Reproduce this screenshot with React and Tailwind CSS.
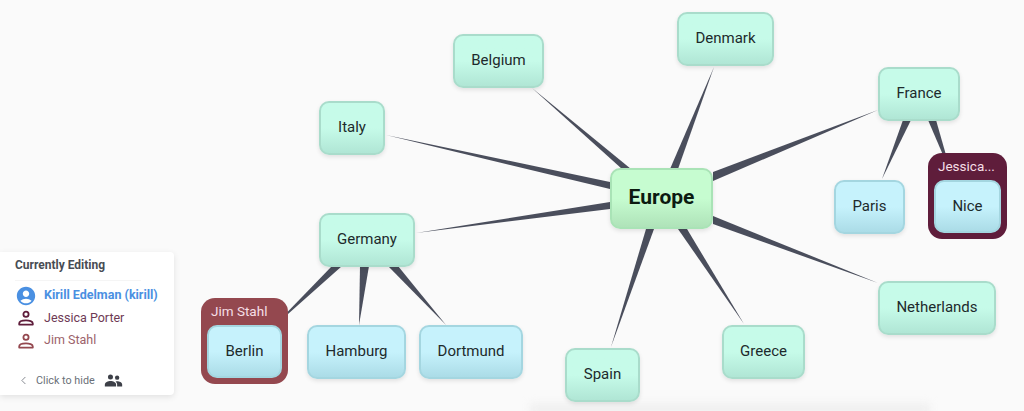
import { ChevronLeft } from "lucide-react";
import { MdAccountCircle } from "react-icons/md";

const mint = "border-[#a9dccb] from-[#c6fbe9] from-50% to-[#b0e6d5]";
const blue = "border-[#a4d6e0] from-[#c6f2fc] from-50% to-[#abdce7]";

// position + size of every node on the canvas
const nodes = [
  { label: "Denmark", color: mint, box: "left-[677px] top-[12px] w-[97px] h-[54px]" },
  { label: "Belgium", color: mint, box: "left-[453px] top-[34px] w-[91px] h-[54px]" },
  { label: "France", color: mint, box: "left-[878px] top-[67px] w-[82px] h-[54px]" },
  { label: "Italy", color: mint, box: "left-[319px] top-[101px] w-[66px] h-[54px]" },
  { label: "Paris", color: blue, box: "left-[834px] top-[180px] w-[71px] h-[54px]" },
  { label: "Germany", color: mint, box: "left-[319px] top-[213px] w-[96px] h-[54px]" },
  { label: "Netherlands", color: mint, box: "left-[878px] top-[281px] w-[118px] h-[54px]" },
  { label: "Hamburg", color: blue, box: "left-[307px] top-[325px] w-[99px] h-[54px]" },
  { label: "Dortmund", color: blue, box: "left-[419px] top-[325px] w-[104px] h-[54px]" },
  { label: "Greece", color: mint, box: "left-[722px] top-[325px] w-[83px] h-[54px]" },
  { label: "Spain", color: mint, box: "left-[565px] top-[348px] w-[75px] h-[54px]" },
];

const edges = [
  "386,135 610,182 610,189",
  "416,233 610,202 610,209",
  "532,88 622,169 631,169",
  "714,67 670,169 678,169",
  "878,110 713,172 713,181",
  "878,283 713,216 713,224",
  "744,324 678,229 687,229",
  "611,347 646,229 654,229",
  "882,179 903,120 911,120",
  "928,120 936,120 952,176",
  "332,266 342,266 270,330",
  "360,266 369,266 359,325",
  "388,266 398,266 446,325",
];

const PersonOutline = ({ className }) => (
  <svg className={className} width="16" height="16" viewBox="0 0 16 16" fill="none" stroke="currentColor" strokeWidth="1.8">
    <circle cx="8" cy="4.2" r="2.6" />
    <path d="M1.2 14.6v-1.2c0-2 3.4-3 6.800-3s6.800 1 6.800 3v1.200z" strokeLinejoin="round" />
  </svg>
);

const PeopleFilled = ({ className }) => (
  <svg className={className} width="19" height="13" viewBox="0 0 20 15" fill="currentColor">
    <circle cx="6.5" cy="3.4" r="2.9" />
    <circle cx="14.2" cy="4.2" r="2.5" />
    <path d="M0 14.5v-2.2c0-2.600 3.600-4.200 6.600-4.200s6.400 1.600 6.400 4.200v2.200z" />
    <path d="M14.2 14.500v-2.400c0-1.400-.7-2.500-1.800-3.300.6-.2 1.300-.3 1.900-.3 2.400 0 5.700 1.300 5.700 3.600v2.400z" />
  </svg>
);

const Node = ({ label, color, box }) => (
  <div
    className={`absolute ${box} flex items-center justify-center rounded-[10px] border-2 bg-linear-to-b ${color} pb-[2px] text-[15px] text-[#1d2a2c] shadow-[0_2px_4px_rgba(0,0,0,0.1)]`}
  >
    {label}
  </div>
);

// node with somebody editing it: coloured frame + user name on top
const EditingNode = ({ label, user, frame, box }) => (
  <div className={`absolute ${box} flex flex-col rounded-[14px] px-[6px] pb-[6px] ${frame}`}>
    <div className="h-[27px] pt-[4px] text-[13.5px] leading-[18px] text-[#f6dfe6] px-[4px] truncate">{user}</div>
    <div className={`flex-1 flex items-center justify-center rounded-[10px] border-2 bg-linear-to-b ${blue} text-[15px] text-[#1d2a2c]`}>
      {label}
    </div>
  </div>
);

const App = () => {
  return (
    <div className="relative w-[1024px] h-[411px] overflow-hidden bg-[#fafafa] font-['Roboto',sans-serif]">
      {/* bottom page shadow */}
      <div className="absolute left-[530px] top-[404px] w-[400px] h-[10px] bg-[#eeeeee] blur-[4px]" />

      <svg className="absolute inset-0" width="1024" height="411" viewBox="0 0 1024 411">
        {edges.map((points) => (
          <polygon key={points} points={points} fill="#4a4e5c" />
        ))}
      </svg>

      {nodes.map((node) => (
        <Node key={node.label} {...node} />
      ))}

      <div className="absolute left-[610px] top-[168px] w-[103px] h-[61px] flex items-center justify-center rounded-[10px] border-2 border-[#a9e3b6] bg-linear-to-b from-[#c6fcd0] from-50% to-[#afe3b9] pb-[2px] text-[21px] font-bold text-[#0c1a10] shadow-[0_2px_4px_rgba(0,0,0,0.1)]">
        Europe
      </div>

      <EditingNode label="Nice" user="Jessica..." frame="bg-[#5f1d3b]" box="left-[928px] top-[153px] w-[79px] h-[86px]" />
      <EditingNode label="Berlin" user="Jim Stahl" frame="bg-[#94484f]" box="left-[201px] top-[298px] w-[87px] h-[86px]" />

      {/* users panel */}
      <div className="absolute left-0 top-[252px] w-[174px] h-[143px] flex flex-col rounded-r-[4px] bg-white pl-[15px] pt-[5px] shadow-[0_2px_6px_rgba(0,0,0,0.1)]">
        <div className="text-[12px] leading-[16px] font-bold text-[#484c54]">Currently Editing</div>
        <div className="mt-[7px] mr-[33px] h-px bg-[#f5f5f5]" />
        <div className="mt-[5px] flex flex-col gap-[3px]">
          <div className="flex h-[19.5px] items-center text-[12.5px] font-bold text-[#4a90e2]">
            <span className="flex w-[29px] shrink-0"><MdAccountCircle size={22} /></span>
            <span className="whitespace-nowrap">Kirill Edelman (kirill)</span>
          </div>
          <div className="flex h-[19.5px] items-center text-[12.5px] text-[#6e3a55]">
            <span className="flex w-[29px] shrink-0 text-[#5f1d3b]"><PersonOutline className="ml-[3px]" /></span>
            <span className="whitespace-nowrap">Jessica Porter</span>
          </div>
          <div className="flex h-[19.5px] items-center text-[12.5px] text-[#9c626a]">
            <span className="flex w-[29px] shrink-0 text-[#94484f]"><PersonOutline className="ml-[3px]" /></span>
            <span className="whitespace-nowrap">Jim Stahl</span>
          </div>
        </div>
        <div className="mt-[22px] flex items-center text-[10.8px] text-[#6a6f78]">
          <ChevronLeft size={13} strokeWidth={1.5} className="ml-[2px]" />
          <span className="ml-[6px]">Click to hide</span>
          <PeopleFilled className="ml-[9px] text-[#3d4048]" />
        </div>
      </div>
    </div>
  );
};

export default App;
